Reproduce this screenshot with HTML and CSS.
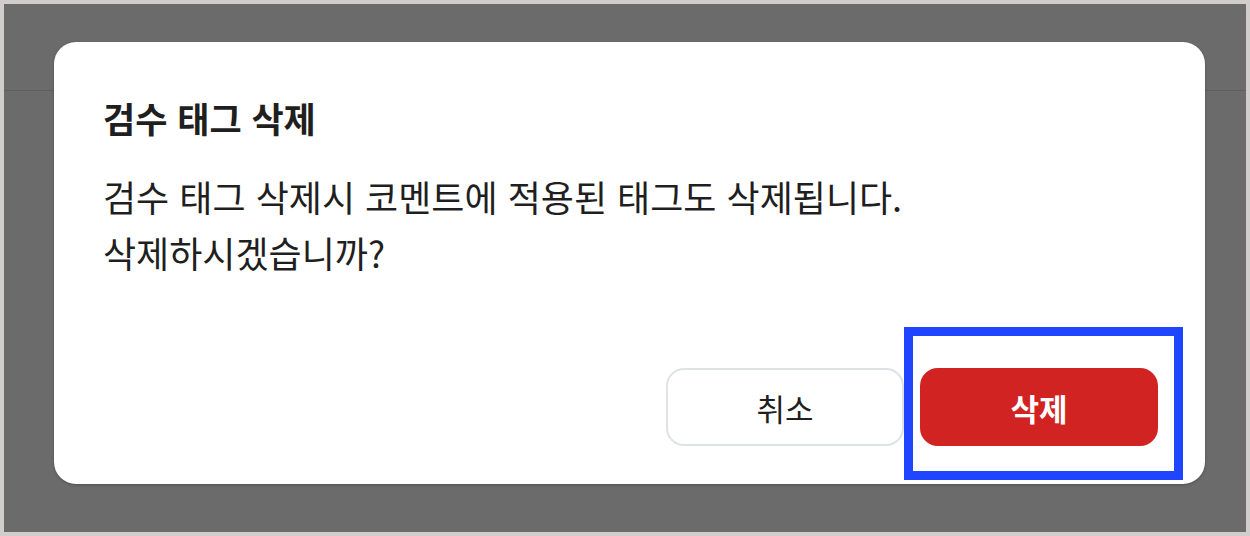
FILE: index.html
```html
<!DOCTYPE html>
<html lang="ko">
<head>
    <meta charset="UTF-8">
    <meta name="viewport" content="width=device-width, initial-scale=1.0">
    <title>검수 태그 삭제</title>
    <link rel="stylesheet" href="styles.css">
</head>
<body>
    <div class="frame">
        <div class="backdrop">
            <div class="modal">
                <h2 class="modal-title">검수 태그 삭제</h2>
                <p class="modal-text">검수 태그 삭제시 코멘트에 적용된 태그도 삭제됩니다.<br>삭제하시겠습니까?</p>
                <div class="modal-actions">
                    <button class="btn btn-cancel">취소</button>
                    <div class="confirm-wrap">
                        <button class="btn btn-delete">삭제</button>
                        <span class="highlight"></span>
                    </div>
                </div>
            </div>
        </div>
    </div>
</body>
</html>
```

FILE: styles.css
```css
:root {
    --frame-color: #d1cdcd;
    --overlay-color: #6b6b6b;
    --text-color: #1f1f1f;
    --danger-color: #d22323;
    --line-color: #dfe3e8;
    --mark-color: #1f45ff;
}

* {
    margin: 0;
    padding: 0;
    box-sizing: border-box;
    font-family: "Noto Sans CJK KR", "Noto Sans", sans-serif;
}

body {
    width: 1250px;
    height: 536px;
    overflow: hidden;
}

.frame {
    height: 100%;
    border: 4px solid var(--frame-color);
}

.backdrop {
    position: relative;
    height: 100%;
    background: var(--overlay-color);
    padding: 38px 41px 48px 50px;
}

/* header line of the page under the overlay */
.backdrop::before {
    content: "";
    position: absolute;
    top: 86px;
    left: 0;
    right: 0;
    height: 1px;
    background: #5f5f5f;
}

.modal {
    position: relative;
    height: 100%;
    background: #fff;
    border-radius: 22px;
    box-shadow: 0 1px 3px rgba(0, 0, 0, 0.25);
    padding: 52px 47px 38px 49px;
    display: flex;
    flex-direction: column;
}

.modal-title {
    color: var(--text-color);
    font-size: 35px;
    font-weight: 700;
    line-height: 48px;
}

.modal-text {
    margin-top: 26px;
    color: var(--text-color);
    font-size: 36px;
    font-weight: 400;
    line-height: 56px;
}

.modal-actions {
    margin-top: auto;
    display: flex;
    justify-content: flex-end;
    gap: 16px;
}

.confirm-wrap {
    position: relative;
}

.btn {
    width: 238px;
    height: 78px;
    border-radius: 18px;
    font-size: 31px;
    font-weight: 400;
    cursor: pointer;
}

.btn-cancel {
    background: #fff;
    border: 2px solid var(--line-color);
    color: var(--text-color);
}

.btn-delete {
    background: var(--danger-color);
    border: 2px solid var(--danger-color);
    color: #fff;
    font-weight: 700;
}

.highlight {
    position: absolute;
    top: -41px;
    left: -16px;
    width: 279px;
    height: 153px;
    border: 9px solid var(--mark-color);
    pointer-events: none;
}
```
